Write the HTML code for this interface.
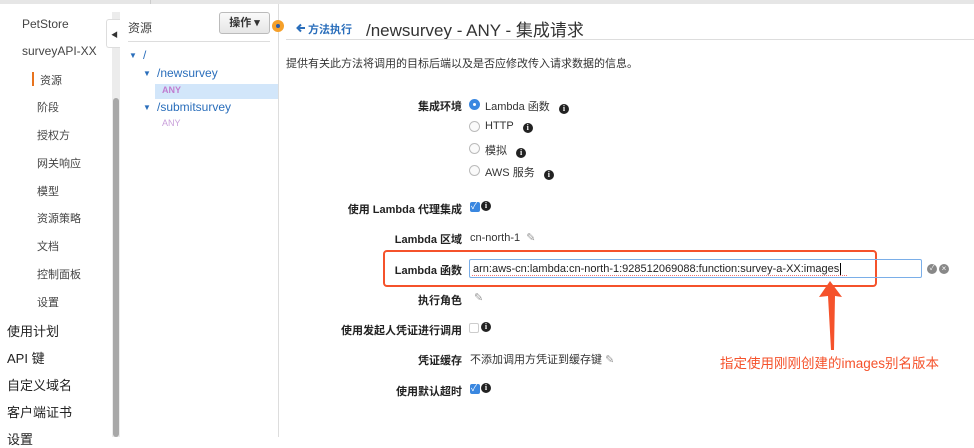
<!DOCTYPE html>
<html><head><meta charset="utf-8"><style>
*{margin:0;padding:0;box-sizing:border-box}
body{width:974px;height:437px;overflow:hidden;background:#fff;font-family:"Liberation Sans","Noto Sans CJK SC",sans-serif;color:#333;position:relative}
.a{position:absolute;white-space:nowrap}
.nav{font-size:11px;color:#444}
.big{font-size:13px;color:#222}
.lab{font-size:11px;font-weight:bold;color:#222;right:512px;text-align:right}
.val{font-size:11px;color:#333}
.info{display:inline-block;width:10px;height:10px;border-radius:50%;background:#222;color:#fff;font-size:8px;line-height:10px;text-align:center;font-weight:bold;font-family:"Liberation Serif",serif;vertical-align:-1px}
.ib{position:absolute;width:10px;height:10px;border-radius:50%;background:#222;color:#fff;font-size:8px;line-height:10px;text-align:center;font-weight:bold;font-family:"Liberation Serif",serif}
.radio{position:absolute;width:11px;height:11px;border-radius:50%;border:1px solid #bbb;background:#fafafa}
.cb{position:absolute;width:10px;height:10px;border-radius:2px;background:#3a87e0}
.pen{color:#999;font-size:11px}
</style></head><body>
<div class="a" style="left:0;top:0;width:974px;height:4px;background:#e6e6e6"></div>
<div class="a" style="left:150px;top:0;width:1px;height:4px;background:#ccc"></div>
<div class="a nav" style="left:22px;top:17px;font-size:12px">PetStore</div>
<div class="a nav" style="left:22px;top:44px;font-size:12px">surveyAPI-XX</div>
<div class="a" style="left:32px;top:72px;width:2px;height:14px;background:#e8731e"></div>
<div class="a nav" style="left:40px;top:72px">资源</div>
<div class="a nav" style="left:37px;top:99px">阶段</div>
<div class="a nav" style="left:37px;top:127px">授权方</div>
<div class="a nav" style="left:37px;top:155px">网关响应</div>
<div class="a nav" style="left:37px;top:183px">模型</div>
<div class="a nav" style="left:37px;top:210px">资源策略</div>
<div class="a nav" style="left:37px;top:238px">文档</div>
<div class="a nav" style="left:37px;top:266px">控制面板</div>
<div class="a nav" style="left:37px;top:294px">设置</div>
<div class="a big" style="left:7px;top:321px">使用计划</div>
<div class="a big" style="left:7px;top:348px">API 键</div>
<div class="a big" style="left:7px;top:375px">自定义域名</div>
<div class="a big" style="left:7px;top:402px">客户端证书</div>
<div class="a big" style="left:7px;top:429px">设置</div>
<div class="a" style="left:112px;top:12px;width:8px;height:425px;background:#ececec"></div>
<div class="a" style="left:113px;top:98px;width:6px;height:339px;background:#a8a8a8;border-radius:3px"></div>
<div class="a" style="left:106px;top:19px;width:14px;height:29px;background:#fff;border:1px solid #ddd;border-right:none;border-radius:3px 0 0 3px;font-size:7px;color:#333;padding:10px 0 0 4px">◀</div>
<div class="a" style="left:278px;top:4px;width:1px;height:433px;background:#ddd"></div>
<div class="a" style="left:128px;top:19px;font-size:12px;color:#444">资源</div>
<div class="a" style="left:219px;top:12px;width:51px;height:22px;border:1px solid #bbb;border-radius:3px;background:linear-gradient(#fafafa,#e6e6e6);font-size:11px;font-weight:bold;color:#333;text-align:center;line-height:20px">操作 ▾</div>
<div class="a" style="left:128px;top:41px;width:142px;height:1px;background:#ddd"></div>
<div class="a" style="left:272px;top:20px;width:12px;height:12px;border-radius:50%;background:#f5a02a"><div style="margin:4px;width:4px;height:4px;border-radius:50%;background:#2a5caa"></div></div>
<div class="a" style="left:129px;top:51px;font-size:8px;color:#2a6ebb">▼</div>
<div class="a" style="left:143px;top:48px;font-size:12px;color:#2a6ebb">/</div>
<div class="a" style="left:143px;top:69px;font-size:8px;color:#2a6ebb">▼</div>
<div class="a" style="left:157px;top:66px;font-size:12px;color:#2a6ebb">/newsurvey</div>
<div class="a" style="left:155px;top:84px;width:123px;height:15px;background:#d2e6fa"></div>
<div class="a" style="left:162px;top:85px;font-size:9px;color:#c07dd0;font-weight:bold">ANY</div>
<div class="a" style="left:143px;top:103px;font-size:8px;color:#2a6ebb">▼</div>
<div class="a" style="left:157px;top:100px;font-size:12px;color:#2a6ebb">/submitsurvey</div>
<div class="a" style="left:162px;top:118px;font-size:9px;color:#c9a0db">ANY</div>
<svg class="a" style="left:296px;top:23px" width="10" height="10"><path d="M9 5 H2 M5 1.5 L1.5 5 L5 8.5" stroke="#2a6ebb" stroke-width="2" fill="none"/></svg>
<div class="a" style="left:308px;top:21px;font-size:11px;font-weight:bold;color:#2a6ebb">方法执行</div>
<div class="a" style="left:366px;top:16px;font-size:17px;color:#333">/newsurvey - ANY - 集成请求</div>
<div class="a" style="left:286px;top:39px;width:688px;height:1px;background:#ddd"></div>
<div class="a val" style="left:286px;top:55px">提供有关此方法将调用的目标后端以及是否应修改传入请求数据的信息。</div>

<div class="a lab" style="top:98px">集成环境</div>
<div class="radio" style="left:469px;top:99px;border-color:#3a87e0;background:#3a87e0"><div style="margin:3px;width:3px;height:3px;border-radius:50%;background:#fff"></div></div>
<div class="a val" style="left:485px;top:98px">Lambda 函数 &nbsp;&nbsp;<span class="info">i</span></div>
<div class="radio" style="left:469px;top:121px"></div>
<div class="a val" style="left:485px;top:120px">HTTP &nbsp;&nbsp;<span class="info">i</span></div>
<div class="radio" style="left:469px;top:143px"></div>
<div class="a val" style="left:485px;top:142px">模拟 &nbsp;&nbsp;<span class="info">i</span></div>
<div class="radio" style="left:469px;top:165px"></div>
<div class="a val" style="left:485px;top:164px">AWS 服务 &nbsp;&nbsp;<span class="info">i</span></div>

<div class="a lab" style="top:201px">使用 Lambda 代理集成</div>
<div class="cb" style="left:470px;top:202px"></div><div class="a" style="left:471px;top:199px;color:#fff;font-size:9px">✓</div>
<div class="ib" style="left:481px;top:201px">i</div>

<div class="a lab" style="top:231px">Lambda 区域</div>
<div class="a val" style="left:470px;top:231px">cn-north-1 &nbsp;<span class="pen">✎</span></div>

<div class="a" style="left:383px;top:250px;width:494px;height:37px;border:2px solid #f5522b;border-radius:4px"></div>
<div class="a lab" style="top:262px">Lambda 函数</div>
<div class="a" style="left:469px;top:259px;width:453px;height:19px;border:1px solid #7aaee8;border-radius:2px;font-size:11px;color:#222;padding:2px 3px;line-height:14px">arn:aws-cn:lambda:cn-north-1:928512069088:function:survey-a-XX:images<span style="border-left:1px solid #000;margin-left:1px"></span></div>
<div class="a" style="left:472px;top:275px;width:375px;border-bottom:1px dotted #f07070"></div>
<div class="a" style="left:927px;top:264px;width:10px;height:10px;border-radius:50%;background:#888;color:#fff;font-size:7px;text-align:center;line-height:10px">✓</div>
<div class="a" style="left:939px;top:264px;width:10px;height:10px;border-radius:50%;background:#888;color:#fff;font-size:8px;text-align:center;line-height:10px">×</div>

<div class="a lab" style="top:292px">执行角色</div>
<div class="a pen" style="left:474px;top:291px">✎</div>
<div class="a lab" style="top:322px">使用发起人凭证进行调用</div>
<div class="a" style="left:469px;top:323px;width:10px;height:10px;border:1px solid #ccc;border-radius:2px"></div>
<div class="ib" style="left:481px;top:322px">i</div>
<div class="a lab" style="top:352px">凭证缓存</div>
<div class="a val" style="left:470px;top:351px">不添加调用方凭证到缓存键 <span class="pen">✎</span></div>
<div class="a lab" style="top:383px">使用默认超时</div>
<div class="cb" style="left:470px;top:384px"></div><div class="a" style="left:471px;top:381px;color:#fff;font-size:9px">✓</div>
<div class="ib" style="left:481px;top:383px">i</div>

<svg class="a" style="left:0;top:0" width="974" height="437"><path d="M830 281 L842 297 L835 296 L834 350 L831 350 L828 296 L819 297 Z" fill="#f5522b"/></svg>
<div class="a" style="left:720px;top:352px;font-size:13.5px;color:#f5522b">指定使用刚刚创建的images别名版本</div>
</body></html>
